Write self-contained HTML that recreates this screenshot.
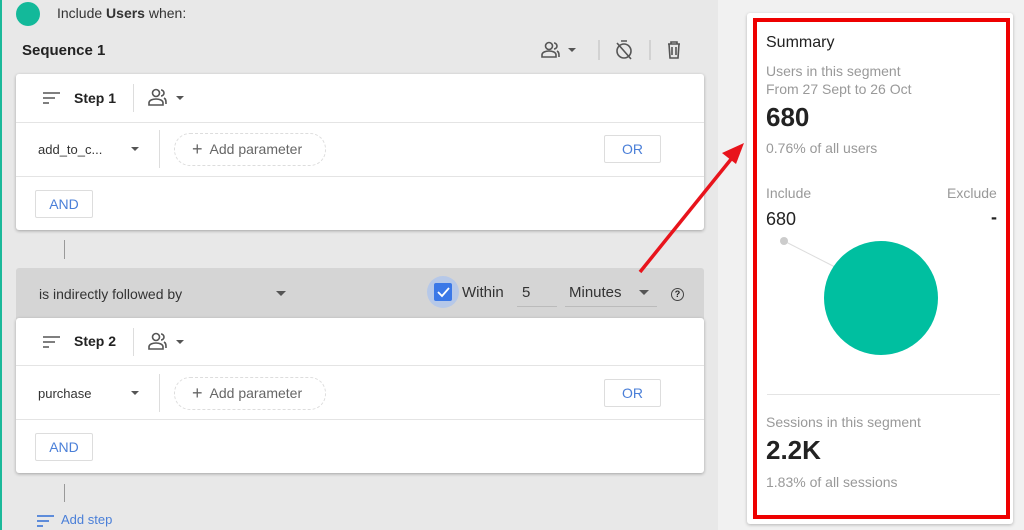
<!DOCTYPE html>
<html><head><meta charset="utf-8"><style>
*{margin:0;padding:0;box-sizing:border-box}
body{width:1024px;height:530px;overflow:hidden;position:relative;background:#e8e8e8;font-family:"Liberation Sans",sans-serif;color:#222}
.a{position:absolute}
.card{position:absolute;left:16px;width:688px;background:#fff;border-radius:3px;box-shadow:0 1px 3px rgba(0,0,0,.3)}
.hr{position:absolute;left:0;right:0;height:1px;background:#e4e4e4}
.btn{position:absolute;border:1px solid #ddd;border-radius:2px;color:#4a7fd8;font-size:14px;text-align:center;background:#fff}
.t{font-size:14px;color:#333}
.g{color:#999}
</style></head><body>
<div class="a" style="left:0;top:0;width:2px;height:530px;background:#1bb99a"></div>
<div class="a" style="left:718px;top:0;width:306px;height:530px;background:#f1f1f1"></div>
<div class="a" style="left:16px;top:2px;width:24px;height:24px;border-radius:50%;background:#13b99a"></div>
<div class="a t" style="left:57px;top:5px">Include <b>Users</b> when:</div>
<div class="a" style="left:22px;top:42px;font-size:15px;font-weight:bold">Sequence 1</div>
<svg class="a" style="left:538px;top:38px" width="150" height="24" viewBox="0 0 150 24" fill="none" stroke="#555" stroke-width="1.6">
<circle cx="11" cy="8" r="3.5"/><path d="M4 19v-2c0-3 4-4 7-4s7 1 7 4v2z"/><path d="M16 5a3 3 0 0 1 0 6M19 13c2 1 2 3 2 6"/>
<path d="M30 10l4 4 4-4z" fill="#555" stroke="none"/>
<line x1="61" y1="2" x2="61" y2="22" stroke="#ccc"/>
<circle cx="86" cy="13" r="7"/><path d="M83 3h6M79 5l14 16"/>
<line x1="112" y1="2" x2="112" y2="22" stroke="#ccc"/>
<path d="M130 6h12M133 6V4h6v2M131 6l1 14h8l1-14M134 9v8M138 9v8"/>
</svg>

<div class="card" style="top:74px;height:156px">
<svg class="a" style="left:26px;top:17px" width="20" height="14" stroke="#555" stroke-width="1.6"><path d="M1 2h17M1 7h12M1 12h6"/></svg>
<div class="a" style="left:58px;top:16px;font-size:14px;font-weight:bold">Step 1</div>
<div class="a" style="left:117px;top:10px;width:1px;height:28px;background:#ddd"></div>
<svg class="a" style="left:130px;top:12px" width="44" height="24" fill="none" stroke="#555" stroke-width="1.6"><circle cx="10" cy="7" r="3.5"/><path d="M3 19v-2c0-3 4-4 7-4s7 1 7 4v2z"/><path d="M15 4a3 3 0 0 1 0 6M18 12c2 1 2 3 2 6"/><path d="M30 10l4 4 4-4z" fill="#555" stroke="none"/></svg>
<div class="hr" style="top:48px"></div>
<div class="a t" style="left:22px;top:68px;font-size:13px">add_to_c...</div>
<svg class="a" style="left:114px;top:72px" width="10" height="6"><path d="M1 1l4 4 4-4z" fill="#555"/></svg>
<div class="a" style="left:143px;top:56px;width:1px;height:38px;background:#ddd"></div>
<div class="a" style="left:158px;top:59px;width:152px;height:33px;border:1px dashed #ddd;border-radius:16px"></div>
<div class="a t" style="left:176px;top:64px;color:#666;font-size:14px"><span style="font-size:18px;position:relative;top:1px">+</span>&nbsp; Add parameter</div>
<div class="btn" style="left:588px;top:61px;width:57px;height:28px;line-height:26px">OR</div>
<div class="hr" style="top:102px"></div>
<div class="btn" style="left:19px;top:116px;width:58px;height:28px;line-height:26px">AND</div>
</div>

<div class="a" style="left:64px;top:240px;width:1px;height:19px;background:#999"></div>
<div class="a" style="left:16px;top:268px;width:688px;height:60px;background:#d5d5d5;border-radius:3px"></div>
<div class="a t" style="left:39px;top:286px">is indirectly followed by</div>
<svg class="a" style="left:275px;top:290px" width="12" height="7"><path d="M1 1l5 5 5-5z" fill="#555"/></svg>
<div class="a" style="left:427px;top:276px;width:32px;height:32px;border-radius:50%;background:#b6c8e8"></div>
<div class="a" style="left:434px;top:283px;width:18px;height:18px;background:#3b78e7;border-radius:2px"></div>
<svg class="a" style="left:434px;top:283px" width="18" height="18"><path d="M4 9l4 4 7-8" stroke="#fff" stroke-width="1.8" fill="none"/></svg>
<div class="a t" style="left:462px;top:284px;font-size:15px">Within</div>
<div class="a t" style="left:522px;top:284px;font-size:15px">5</div>
<div class="a" style="left:517px;top:306px;width:40px;height:1px;background:#bbb"></div>
<div class="a t" style="left:569px;top:284px;font-size:15px">Minutes</div>
<svg class="a" style="left:638px;top:289px" width="12" height="7"><path d="M1 1l5 5 5-5z" fill="#555"/></svg>
<div class="a" style="left:565px;top:306px;width:92px;height:1px;background:#bbb"></div>
<div class="a" style="left:671px;top:288px;width:13px;height:13px;border:1.3px solid #444;border-radius:50%;font-size:9px;text-align:center;line-height:11px;font-weight:bold">?</div>

<div class="card" style="top:318px;height:155px">
<svg class="a" style="left:26px;top:17px" width="20" height="14" stroke="#555" stroke-width="1.6"><path d="M1 2h17M1 7h12M1 12h6"/></svg>
<div class="a" style="left:58px;top:15px;font-size:14px;font-weight:bold">Step 2</div>
<div class="a" style="left:117px;top:10px;width:1px;height:28px;background:#ddd"></div>
<svg class="a" style="left:130px;top:12px" width="44" height="24" fill="none" stroke="#555" stroke-width="1.6"><circle cx="10" cy="7" r="3.5"/><path d="M3 19v-2c0-3 4-4 7-4s7 1 7 4v2z"/><path d="M15 4a3 3 0 0 1 0 6M18 12c2 1 2 3 2 6"/><path d="M30 10l4 4 4-4z" fill="#555" stroke="none"/></svg>
<div class="hr" style="top:47px"></div>
<div class="a t" style="left:22px;top:68px;font-size:13px">purchase</div>
<svg class="a" style="left:114px;top:72px" width="10" height="6"><path d="M1 1l4 4 4-4z" fill="#555"/></svg>
<div class="a" style="left:143px;top:56px;width:1px;height:38px;background:#ddd"></div>
<div class="a" style="left:158px;top:59px;width:152px;height:33px;border:1px dashed #ddd;border-radius:16px"></div>
<div class="a t" style="left:176px;top:64px;color:#666"><span style="font-size:18px;position:relative;top:1px">+</span>&nbsp; Add parameter</div>
<div class="btn" style="left:588px;top:61px;width:57px;height:28px;line-height:26px">OR</div>
<div class="hr" style="top:101px"></div>
<div class="btn" style="left:19px;top:115px;width:58px;height:28px;line-height:26px">AND</div>
</div>
<div class="a" style="left:64px;top:484px;width:1px;height:18px;background:#999"></div>
<svg class="a" style="left:36px;top:514px" width="20" height="14" stroke="#4a7fd8" stroke-width="1.8"><path d="M1 2h17M1 7h12M1 12h6"/></svg>
<div class="a" style="left:61px;top:512px;font-size:13px;color:#4a7fd8">Add step</div>

<svg class="a" style="left:0;top:0" width="1024" height="530"><line x1="640" y1="272" x2="732" y2="158" stroke="#e8141c" stroke-width="3.5"/><path d="M744 143l-22 10 14 11z" fill="#e8141c"/></svg>

<div class="a" style="left:747px;top:13px;width:266px;height:511px;background:#fff;border-radius:3px;box-shadow:0 1px 3px rgba(0,0,0,.25)"></div>
<div class="a" style="left:753px;top:18px;width:257px;height:501px;border:4px solid #ee0000"></div>
<div class="a" style="left:766px;top:34px;font-size:16px;color:#222">Summary</div>
<div class="a g" style="left:766px;top:62px;font-size:14px;line-height:18px">Users in this segment<br>From 27 Sept to 26 Oct</div>
<div class="a" style="left:766px;top:102px;font-size:26px;font-weight:bold;color:#222">680</div>
<div class="a g" style="left:766px;top:140px;font-size:14px">0.76% of all users</div>
<div class="a g" style="left:766px;top:185px;font-size:14px">Include</div>
<div class="a g" style="left:947px;top:185px;font-size:14px">Exclude</div>
<div class="a" style="left:766px;top:209px;font-size:18px;color:#222">680</div>
<div class="a" style="left:991px;top:207px;font-size:18px;color:#222;font-weight:bold">-</div>
<svg class="a" style="left:760px;top:230px" width="200" height="130"><line x1="24" y1="11" x2="75" y2="37" stroke="#ddd"/><circle cx="24" cy="11" r="4" fill="#ccc"/><circle cx="121" cy="68" r="57" fill="#00bfa0"/></svg>
<div class="a" style="left:767px;top:394px;width:233px;height:1px;background:#e4e4e4"></div>
<div class="a g" style="left:766px;top:414px;font-size:14px">Sessions in this segment</div>
<div class="a" style="left:766px;top:435px;font-size:26px;font-weight:bold;color:#222">2.2K</div>
<div class="a g" style="left:766px;top:474px;font-size:14px">1.83% of all sessions</div>
</body></html>
